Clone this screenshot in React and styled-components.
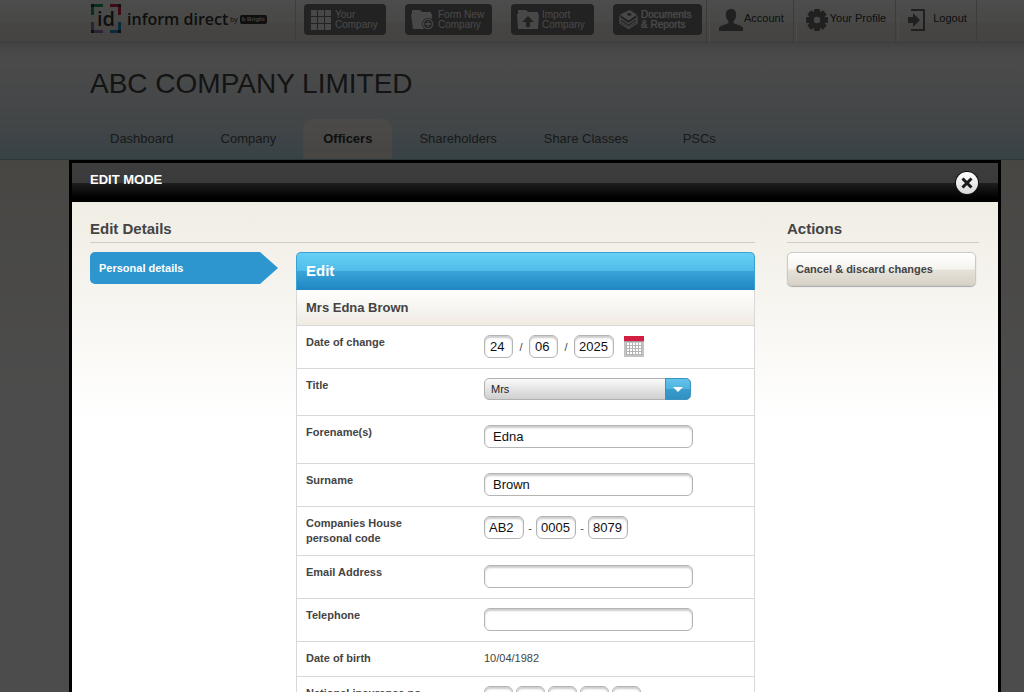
import React, { useState } from 'react';
import styled, { createGlobalStyle, css } from 'styled-components';

const TABS = ['Dashboard', 'Company', 'Officers', 'Shareholders', 'Share Classes', 'PSCs'];

const GridIcon = () => (
    <svg width="22" height="22" viewBox="0 0 22 22" fill="currentColor" aria-hidden="true">
        {[0, 7, 14].map((y) => [0, 7, 14].map((x) => (
            <rect key={`${x}-${y}`} x={x + 1} y={y + 1} width="6" height="6" />
        )))}
    </svg>
);

const FolderPlusIcon = () => (
    <svg width="24" height="20" viewBox="0 0 24 20" aria-hidden="true">
        <path d="M1 0h8l2 2h9v2H1z" fill="currentColor" />
        <path d="M0 4h21l-1 15H2z" fill="currentColor" />
        <circle cx="17" cy="14" r="6" fill="#727272" />
        <circle cx="17" cy="14" r="4.600" fill="none" stroke="currentColor" strokeWidth="1.4" />
        <path d="M17 11v6M14 14h6" stroke="currentColor" strokeWidth="1.4" />
    </svg>
);

const FolderUpIcon = () => (
    <svg width="22" height="20" viewBox="0 0 22 20" aria-hidden="true">
        <path d="M1 0h8l2 2h10v2H1z" fill="currentColor" />
        <path d="M0 4h22l-1 15H1z" fill="currentColor" />
        <path d="M11 6l6 6h-4v5H9v-5H5z" fill="#727272" />
    </svg>
);

const PapersIcon = () => (
    <svg width="19" height="21" viewBox="0 0 20 22" aria-hidden="true">
        <path d="M11 1l8 5-9 6-9-6z" fill="currentColor" />
        <path d="M8 5l3-1 3 2-4 1.500z" fill="#727272" />
        <path d="M1 7v2.500l9 6 9-6V7M1 10v2.500l9 6 9-6V10M1 13v2l9 5.500 9-5.500v-2" fill="none" stroke="currentColor" strokeWidth="1.200" />
    </svg>
);

const PersonIcon = () => (
    <svg width="24" height="22" viewBox="0 0 24 22" fill="currentColor" aria-hidden="true">
        <path d="M12 0c3.500 0 5.200 2.400 5.200 5.500 0 3-1.200 5.500-2.700 6.800v1.900c1.500 1 8.500 1.800 9.500 4.800V22H0v-3c1-3 8-3.800 9.500-4.800v-1.900C8 11 6.800 8.500 6.800 5.500 6.800 2.400 8.500 0 12 0z" />
    </svg>
);

const GearIcon = () => (
    <svg width="22" height="22" viewBox="0 0 22 22" aria-hidden="true">
        <g fill="currentColor">
            {[0, 45, 90, 135].map((a) => (
                <rect key={a} x="8" y="0" width="6" height="22" rx="1" transform={`rotate(${a} 11 11)`} />
            ))}
            <circle cx="11" cy="11" r="8.500" />
        </g>
        <circle cx="11" cy="11" r="3.200" fill="#f0eeea" />
    </svg>
);

const LogoutIcon = () => (
    <svg width="18" height="22" viewBox="0 0 18 22" aria-hidden="true">
        <path d="M3 1h13v20H3" fill="none" stroke="currentColor" strokeWidth="2" />
        <path d="M0 8h5V4l7 7-7 7v-4H0z" fill="currentColor" />
    </svg>
);

const CalendarIcon = () => (
    <svg width="20" height="21" viewBox="0 0 20 21" aria-hidden="true">
        <path d="M0 0h20v21H0z" fill="#c4c2c2" />
        <path d="M0 0h20v5H0z" fill="#d41e41" />
        <path d="M0 5h20v1H0z" fill="#a5a0a0" />
        <path d="M2 7h16v12H2z" fill="#b4b4b4" />
        {[7, 10, 13, 16].map((y) => [3, 6, 9, 12, 15].map((x) => (
            <rect key={`${x}-${y}`} x={x} y={y} width="2" height="2" fill="#fff" />
        )))}
    </svg>
);

const Brackets = () => (
    <svg width="32" height="32" viewBox="0 0 32 32" fill="none" strokeWidth="3" aria-hidden="true">
        <path d="M2.500 12V2.500H13" stroke="#20a060" />
        <path d="M20 2.500h9.500V12" stroke="#d41e48" />
        <path d="M2.500 19v9.500H13" stroke="#8f78b8" />
        <path d="M20 28.500h9.500V19" stroke="#1c94d0" />
        <path d="M1 1h3v3H1zM28 1h3v3h-3zM1 27h3v3H1zM28 27h3v3h-3z" fill="#333" />
    </svg>
);

const CloseIcon = () => (
    <svg width="12" height="12" viewBox="0 0 12 12" aria-hidden="true">
        <path d="M1.500 1.500l9 9M10.500 1.500l-9 9" stroke="#1a1a1a" strokeWidth="3" />
    </svg>
);

const App = () => {
    const [date, setDate] = useState({ day: '24', month: '06', year: '2025' });
    const [code, setCode] = useState(['AB2', '0005', '8079']);
    const [ni, setNi] = useState(['', '', '', '', '']);
    const [title, setTitle] = useState('Mrs');
    const [open, setOpen] = useState(true);

    // Replace one part of a split field
    const replaceAt = (list, index, value) => list.map((item, i) => (i === index ? value : item));

    return (
        <Page>
            <GlobalStyle />
            <Header>
                <Logo href="#">
                    <LogoMark>
                        <Brackets />
                        <span>id</span>
                    </LogoMark>
                    <LogoName>inform direct</LogoName>
                    <LogoBy>by</LogoBy>
                    <LogoBadge>b Bright</LogoBadge>
                </Logo>
                <HeaderButtons>
                    <HeaderButton $width={82}><GridIcon /><span>Your<br />Company</span></HeaderButton>
                    <HeaderButton $width={87}><FolderPlusIcon /><span>Form New<br />Company</span></HeaderButton>
                    <HeaderButton $width={83}><FolderUpIcon /><span>Import<br />Company</span></HeaderButton>
                    <HeaderButton $width={89} $strong><PapersIcon /><span>Documents<br />&amp; Reports</span></HeaderButton>
                </HeaderButtons>
                <HeaderLink href="#" $gap={1}><PersonIcon /><span>Account</span></HeaderLink>
                <HeaderLink href="#" $gap={2}><GearIcon /><span>Your Profile</span></HeaderLink>
                <HeaderLink href="#" $gap={7}><LogoutIcon /><span>Logout</span></HeaderLink>
                <HeaderEnd />
            </Header>
            <Hero>
                <h1>ABC COMPANY LIMITED</h1>
                <Tabs>
                    {TABS.map((tab) => (
                        <Tab key={tab} href="#" $active={tab === 'Officers'}>{tab}</Tab>
                    ))}
                </Tabs>
            </Hero>

            {open && (
                <Overlay>
                    <Modal role="dialog" aria-label="Edit mode">
                        <ModalHeader>
                            <h2>EDIT MODE</h2>
                            <CloseButton aria-label="Close" onClick={() => setOpen(false)}><CloseIcon /></CloseButton>
                        </ModalHeader>
                        <ModalBody>
                            <Details>
                                <SectionTitle>Edit Details</SectionTitle>
                                <Columns>
                                    <Steps>
                                        <Step href="#">Personal details</Step>
                                    </Steps>
                                    <Card>
                                        <CardHeader>Edit</CardHeader>
                                        <CardName>Mrs Edna Brown</CardName>
                                        <Row>
                                            <Label htmlFor="day">Date of change</Label>
                                            <Fields>
                                                <Input $size="small" id="day" value={date.day} onChange={(e) => setDate({ ...date, day: e.target.value })} />
                                                <Separator $width={16}>/</Separator>
                                                <Input $size="small" aria-label="Month" value={date.month} onChange={(e) => setDate({ ...date, month: e.target.value })} />
                                                <Separator $width={16}>/</Separator>
                                                <Input $size="medium" aria-label="Year" value={date.year} onChange={(e) => setDate({ ...date, year: e.target.value })} />
                                                <CalendarButton type="button" aria-label="Choose a date"><CalendarIcon /></CalendarButton>
                                            </Fields>
                                        </Row>
                                        <Row $height={47}>
                                            <Label htmlFor="title">Title</Label>
                                            <SelectBox>
                                                <select id="title" value={title} onChange={(e) => setTitle(e.target.value)}>
                                                    <option>Mr</option>
                                                    <option>Mrs</option>
                                                    <option>Miss</option>
                                                    <option>Ms</option>
                                                </select>
                                            </SelectBox>
                                        </Row>
                                        <Row $height={48}>
                                            <Label htmlFor="forename">Forename(s)</Label>
                                            <Input id="forename" defaultValue="Edna" />
                                        </Row>
                                        <Row>
                                            <Label htmlFor="surname">Surname</Label>
                                            <Input id="surname" defaultValue="Brown" />
                                        </Row>
                                        <Row>
                                            <Label htmlFor="code-0">Companies House personal code</Label>
                                            <Fields>
                                                {code.map((part, i) => (
                                                    <React.Fragment key={i}>
                                                        {i > 0 && <Separator $width={12}>-</Separator>}
                                                        <Input $size="medium" id={`code-${i}`} aria-label={`Personal code part ${i + 1}`} value={part} onChange={(e) => setCode(replaceAt(code, i, e.target.value))} />
                                                    </React.Fragment>
                                                ))}
                                            </Fields>
                                        </Row>
                                        <Row>
                                            <Label htmlFor="email">Email Address</Label>
                                            <Input id="email" type="email" />
                                        </Row>
                                        <Row>
                                            <Label htmlFor="telephone">Telephone</Label>
                                            <Input id="telephone" type="tel" />
                                        </Row>
                                        <Row $height={35}>
                                            <Label as="span">Date of birth</Label>
                                            <Value>10/04/1982</Value>
                                        </Row>
                                        <Row>
                                            <Label htmlFor="ni-0">National insurance no.</Label>
                                            <Fields $gap={3}>
                                                {ni.map((part, i) => (
                                                    <Input key={i} $size="small" id={`ni-${i}`} aria-label={`National insurance part ${i + 1}`} value={part} onChange={(e) => setNi(replaceAt(ni, i, e.target.value))} />
                                                ))}
                                            </Fields>
                                        </Row>
                                    </Card>
                                </Columns>
                            </Details>
                            <Actions>
                                <SectionTitle>Actions</SectionTitle>
                                <ActionButton onClick={() => setOpen(false)}>Cancel &amp; discard changes</ActionButton>
                            </Actions>
                        </ModalBody>
                    </Modal>
                </Overlay>
            )}
        </Page>
    );
};

export default App;

const GlobalStyle = createGlobalStyle`
    *, *::before, *::after{
        box-sizing: border-box;
    }

    body{
        margin: 0;
        overflow: hidden;
        font-family: "Liberation Sans", Arial, sans-serif;
        font-size: 11px;
        color: #444;
    }

    h1, h2, h3{
        margin: 0;
    }

    a{
        color: inherit;
        text-decoration: none;
    }

    button, input, select{
        font-family: inherit;
    }

    button{
        cursor: pointer;
    }
`;

const Page = styled.div`
    min-height: 100vh;
    background: linear-gradient(#f0ece2 160px, #fff 400px);
`;

//Header
const Header = styled.header`
    display: flex;
    height: 43px;
    padding-left: 90px;
    background: linear-gradient(#fff, #f4f2ee 22px, #ebe8e2 23px, #e6e2dc);
    border-bottom: 1px solid #ccc8c2;
`;

const Logo = styled.a`
    display: flex;
    align-items: center;
    width: 205px;
    height: 38px;
    color: #333;
`;

const LogoMark = styled.div`
    display: grid;
    place-items: center;
    width: 32px;
    margin-right: 5px;

    svg, span{
        grid-area: 1 / 1;
    }

    span{
        font-family: "Open Sans", sans-serif;
        font-size: 20px;
        line-height: 20px;
        font-weight: 600;
    }
`;

const LogoName = styled.span`
    font-family: "Open Sans", sans-serif;
    font-size: 16px;
    font-weight: 600;
    white-space: nowrap;
`;

const LogoBy = styled.span`
    margin: 0 2px;
    font-size: 7px;
`;

const LogoBadge = styled.span`
    padding: 0 2px;
    border-radius: 2px;
    background-color: #333;
    color: #ddd;
    font-size: 6px;
    font-weight: bold;
    line-height: 9px;
    white-space: nowrap;
`;

const HeaderButtons = styled.div`
    display: flex;
    align-items: flex-start;
    gap: 19px;
    padding: 4px 4px 0 8px;
    border-left: 1px solid #d0ccc6;
`;

const HeaderButton = styled.button`
    display: flex;
    align-items: center;
    gap: 3px;
    width: ${({ $width }) => $width}px;
    height: 31px;
    padding: 0 0 0 6px;
    border: 0;
    border-radius: 4px;
    background-color: #727272;
    color: #f0f0f0;
    font-size: 10px;
    text-shadow: ${({ $strong }) => $strong ? '0 0 1px #f0f0f0' : 'none'};
    line-height: 10px;
    text-align: left;
    white-space: nowrap;

    svg{
        flex-shrink: 0;
    }
`;

const HeaderLink = styled.a`
    display: flex;
    align-items: flex-start;
    gap: ${({ $gap }) => $gap}px;
    padding: 9px 9px 0 12px;
    border-left: 1px solid #ccc8c2;
    background: linear-gradient(#fff, #fff) 2px 0 / 1px 100% no-repeat;
    color: #333;
    white-space: nowrap;

    svg{
        color: #6c6c6c;
    }

    span{
        line-height: 19px;
    }
`;

const HeaderEnd = styled.div`
    border-left: 1px solid #ccc8c2;
`;

const Hero = styled.section`
    padding: 23px 0 0 90px;
    border-bottom: 1px solid #94b4c0;
    background: linear-gradient(#dedede, #f6f6f6 10px, #f8f8f8 20px, #dfe9ee 80px, #bbdfed);

    h1{
        color: #444;
        font-size: 28px;
        font-weight: normal;
        line-height: 36px;
    }
`;

const Tabs = styled.nav`
    display: flex;
    gap: 7px;
    margin-top: 17px;
`;

const Tab = styled.a`
    min-width: 88px;
    padding: 0 20px;
    color: #555;
    font-size: 13px;
    line-height: 40px;
    text-align: center;
    white-space: nowrap;

    ${({ $active }) => $active && css`
        border-radius: 10px 10px 0 0;
        background: linear-gradient(#fcf8f4, #eee8e0);
        color: #333;
        font-weight: bold;
    `}
`;

//Dialog
const Overlay = styled.div`
    position: fixed;
    inset: 0;
    padding: 160px 23px 0 69px;
    overflow: hidden;
    background-color: rgba(0, 0, 0, 0.7);
`;

const Modal = styled.div`
    border: 3px solid #000;
    background-color: #fff;
`;

const ModalHeader = styled.div`
    display: flex;
    justify-content: space-between;
    align-items: flex-start;
    height: 39px;
    padding: 8px 20px 0 18px;
    background: linear-gradient(#3d3d3d, #3a3a3a 20px, #1e1e1e 20px, #000 35px);

    h2{
        color: #fff;
        font-size: 13px;
        line-height: 17px;
    }
`;

const CloseButton = styled.button`
    display: grid;
    place-items: center;
    width: 22px;
    height: 22px;
    margin-top: 1px;
    padding: 0;
    border: 0;
    border-radius: 50%;
    background: linear-gradient(#fff, #d8d8d8);
    box-shadow: 0 0 0 1px #111;
`;

const ModalBody = styled.div`
    display: flex;
    gap: 32px;
    padding: 18px 19px 40px 18px;
    background: linear-gradient(#f0ede4, #fff 220px);
`;

const Details = styled.section`
    flex: 1;
`;

const SectionTitle = styled.h3`
    margin-bottom: 9px;
    padding-bottom: 4px;
    border-bottom: 1px solid #cfcbc5;
    font-size: 15px;
    line-height: 18px;
`;

const Columns = styled.div`
    display: flex;
    gap: 18px;
`;

const Steps = styled.nav`
    width: 188px;
`;

const Step = styled.a`
    display: block;
    padding-left: 9px;
    border-radius: 5px 0 0 5px;
    background-color: #2d96cf;
    clip-path: polygon(0 0, calc(100% - 18px) 0, 100% 50%, calc(100% - 18px) 100%, 0 100%);
    color: #fff;
    font-weight: bold;
    line-height: 32px;
`;

const Card = styled.form`
    flex: 1;
    border: 1px solid #d8d8d8;
    border-top: 0;
    border-radius: 5px 5px 0 0;
    background-color: #fff;
`;

const CardHeader = styled.h3`
    margin: 0 -1px;
    padding: 0 9px;
    border: 1px solid #3ba0d2;
    border-bottom-color: #2484bd;
    border-radius: 5px 5px 0 0;
    background: linear-gradient(#66d0f5, #4fbce8 18px, #3aa4da 18px, #2087c2);
    color: #fff;
    font-size: 15px;
    line-height: 36px;
`;

const CardName = styled.h3`
    padding: 0 9px;
    border-bottom: 1px solid #d8d8d8;
    background: linear-gradient(#fff, #efebe2);
    font-size: 13px;
    line-height: 35px;
`;

const Row = styled.div`
    display: flex;
    align-items: flex-start;
    min-height: ${({ $height }) => $height || 43}px;
    padding: 9px;
    border-bottom: 1px solid #d8d8d8;
`;

const Label = styled.label`
    width: 178px;
    padding-right: 50px;
    font-weight: bold;
    line-height: 15px;
`;

const Fields = styled.div`
    display: flex;
    align-items: center;
    gap: ${({ $gap }) => $gap || 0}px;
`;

const sizes = {
    small: css`width: 29px; padding: 0 5px 1px;`,
    medium: css`width: 40px; padding: 0 4px 1px;`,
    large: css`width: 209px; padding: 0 8px 1px;`,
};

const Input = styled.input`
    height: 23px;
    border: 1px solid #b4b4b4;
    border-radius: 6px;
    outline: none;
    background-color: #fff;
    box-shadow: inset 0 2px 2px #ccc;
    color: #111;
    font-size: 13px;
    ${({ $size }) => sizes[$size || 'large']}
`;

const Separator = styled.span`
    width: ${({ $width }) => $width}px;
    text-align: center;
`;

const CalendarButton = styled.button`
    display: flex;
    margin-left: 10px;
    padding: 0;
    border: 0;
    background: none;
`;

const SelectBox = styled.div`
    position: relative;
    width: 207px;

    select{
        display: block;
        width: 100%;
        height: 22px;
        padding: 0 30px 1px 6px;
        appearance: none;
        border: 1px solid #b0b0b0;
        border-radius: 5px;
        outline: none;
        background: linear-gradient(#fafafa, #cfcfcf);
        color: #222;
        font-size: 11px;
    }

    &::before{
        content: '';
        position: absolute;
        top: 0;
        right: 0;
        width: 26px;
        height: 22px;
        border: 1px solid #3b93bf;
        border-radius: 0 5px 5px 0;
        background: linear-gradient(#62c4ec, #4fb2de 50%, #3a9ccc 50%, #3090c2);
        pointer-events: none;
    }

    &::after{
        content: '';
        position: absolute;
        top: 9px;
        right: 8px;
        border: 5px solid transparent;
        border-top-color: #fff;
        border-bottom: 0;
        pointer-events: none;
    }
`;

const Value = styled.span`
    line-height: 15px;
`;

const Actions = styled.aside`
    width: 192px;
`;

const ActionButton = styled.button`
    width: 189px;
    height: 34px;
    padding: 0 8px;
    border: 1px solid #cdcac5;
    border-radius: 5px;
    background: linear-gradient(#fff, #f5f3ef 16px, #e6e2da 17px, #d8d2c6);
    box-shadow: 0 1px 1px #aaa;
    color: #444;
    font-size: 11px;
    font-weight: bold;
    text-align: left;
`;
